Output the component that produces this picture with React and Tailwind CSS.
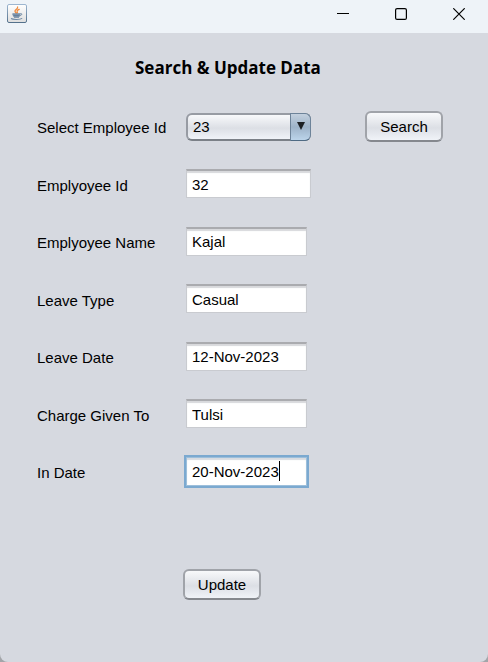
import React from "react";

function JavaIcon() {
  return (
    <svg viewBox="0 0 20 19" className="h-[19px] w-5" aria-hidden="true">
      <defs>
        <linearGradient id="frame" x1="0" y1="0" x2="0" y2="1">
          <stop offset="0" stopColor="#9db6d0" />
          <stop offset="1" stopColor="#54718c" />
        </linearGradient>
        <linearGradient id="face" x1="0" y1="0" x2="0" y2="1">
          <stop offset="0" stopColor="#ffffff" />
          <stop offset="1" stopColor="#dedede" />
        </linearGradient>
      </defs>
      <rect x="0.5" y="0.5" width="19" height="18" rx="1.5" fill="url(#face)" stroke="url(#frame)" />
      <path d="M10.6 3c.6 1.700-2.600 2.500-2.600 4.100 0 .9.700 1.300 1.100 1.900M12.200 5.300c-1.600.6-2.400 1.300-2 2.200.3.600.4 1-.2 1.600" fill="none" stroke="#f08a3c" strokeWidth="1.300" strokeLinecap="round" />
      <path d="M5.300 9.700h8.200c-.1 1.700-.7 2.900-1.500 3.500H7c-1-.7-1.600-1.900-1.700-3.500z" fill="#8ba0b8" />
      <path d="M5.500 9.900h7.800M6.400 11.600h6M7 13.200h5" stroke="#5d7995" strokeWidth="0.900" fill="none" />
      <path d="M13.400 9.600c1.900-.5 2 1.700-.8 2.200" fill="none" stroke="#6d88a4" strokeWidth="1" />
      <path d="M4 14.500c1.500 1.200 9 1.300 11.200-.1" fill="none" stroke="#6d88a4" strokeWidth="1.100" />
    </svg>
  );
}

function TitleBar() {
  return (
    <header className="flex h-[33px] items-start justify-between bg-[#eef3f8] pl-[7px]">
      <div className="pt-1">
        <JavaIcon />
      </div>
      <div className="flex h-7">
        <button type="button" aria-label="Minimize" className="flex w-[58px] items-center justify-center">
          <svg viewBox="0 0 12 12" className="size-3" stroke="#000" fill="none">
            <path d="M0 5.500h12" />
          </svg>
        </button>
        <button type="button" aria-label="Maximize" className="flex w-[58px] items-center justify-center">
          <svg viewBox="0 0 12 12" className="size-3" stroke="#000" fill="none">
            <rect x="0.600" y="0.600" width="10.800" height="10.800" rx="1.500" strokeWidth="1.200" />
          </svg>
        </button>
        <button type="button" aria-label="Close" className="flex w-[58px] items-center justify-center">
          <svg viewBox="0 0 12 12" className="size-3" stroke="#000" fill="none">
            <path d="M0.300 0.300l11.400 11.400M11.700 0.300L0.300 11.700" strokeWidth="1.200" />
          </svg>
        </button>
      </div>
    </header>
  );
}

function NimbusButton({ children, type = "button" }) {
  return (
    <button
      type={type}
      className="h-[31px] w-[78px] rounded-md border-2 border-[#a0a3a9] border-b-[#85888e] bg-linear-to-b from-[#f8f9fb] via-[#dcdfe5] via-55% to-[#f0f3f8] pt-px"
    >
      {children}
    </button>
  );
}

const fields = [
  { id: "emp-id", label: "Emplyoyee Id", value: "32", width: "w-[125px]" },
  { id: "emp-name", label: "Emplyoyee Name", value: "Kajal", width: "w-[121px]" },
  { id: "leave-type", label: "Leave Type", value: "Casual", width: "w-[121px]" },
  { id: "leave-date", label: "Leave Date", value: "12-Nov-2023", width: "w-[121px]" },
  { id: "charge", label: "Charge Given To", value: "Tulsi", width: "w-[121px]" },
  { id: "in-date", label: "In Date", value: "20-Nov-2023", width: "w-[121px]", active: true },
];

function Field({ id, label, value, width, active }) {
  return (
    <div className="flex h-[29px] items-center">
      <label htmlFor={id} className="w-[149px] shrink-0 pt-1">
        {label}
      </label>
      <div className="relative">
        <input
          id={id}
          type="text"
          defaultValue={value}
          className={`${width} block h-[29px] border bg-white pl-[5px] outline-none ${
            active
              ? "border-[#9dbfdb] shadow-[inset_0_2px_1px_#d8dbe0] ring-2 ring-[#7ba9d0]"
              : "border-t-2 border-[#c9cbd0] border-t-[#aaabaf] shadow-[inset_0_2px_1px_#d8d9dc]"
          }`}
        />
        {active && <span className="absolute top-1 left-[93px] h-5 w-px bg-black" />}
      </div>
    </div>
  );
}

export default function App() {
  return (
    <div className="bg-[#a3a5a9]">
      <div className="flex min-h-screen flex-col overflow-hidden rounded-b-lg bg-[#d6d9e0] font-['Liberation_Sans',Arial,sans-serif] text-[15px] leading-5 text-black">
        <TitleBar />
        <main className="px-[37px] pt-[23px]">
          <h1 className="pl-[98px] font-['Open_Sans','Noto_Sans',sans-serif] text-[17px] leading-6 font-bold">
            Search &amp; Update Data
          </h1>
          <form onSubmit={(e) => e.preventDefault()}>
            <div className="mt-[31px] flex h-[31px] items-center">
              <label htmlFor="select-id" className="w-[149px] shrink-0 pt-[2px]">
                Select Employee Id
              </label>
              <div className="relative mr-[54px]">
                <select
                  id="select-id"
                  defaultValue="23"
                  className="block h-7 w-[125px] appearance-none rounded-md border-2 border-[#979ba3] border-b-[#7b8087] bg-linear-to-b from-[#f8f9fb] via-[#dcdfe5] via-55% to-[#f0f3f8] pt-px pl-[5px] outline-none"
                >
                  <option>23</option>
                </select>
                <span className="pointer-events-none absolute inset-y-0 right-0 flex w-[21px] items-center justify-center rounded-r-md border border-[#6d8399] border-b-[#4f6b84] bg-linear-to-b from-[#c3d0de] via-[#9db3c9] via-50% to-[#bcd4ea] pb-px">
                  <svg viewBox="0 0 8 8" className="size-2" aria-hidden="true">
                    <path d="M0 0h8L4 8z" fill="#1c2024" />
                  </svg>
                </span>
              </div>
              <NimbusButton>Search</NimbusButton>
            </div>
            <div className="mt-[27px] flex h-[317px] flex-col justify-between">
              {fields.map((f) => (
                <Field key={f.id} {...f} />
              ))}
            </div>
            <div className="mt-[83px] pl-[146px]">
              <NimbusButton type="submit">Update</NimbusButton>
            </div>
          </form>
        </main>
      </div>
    </div>
  );
}
